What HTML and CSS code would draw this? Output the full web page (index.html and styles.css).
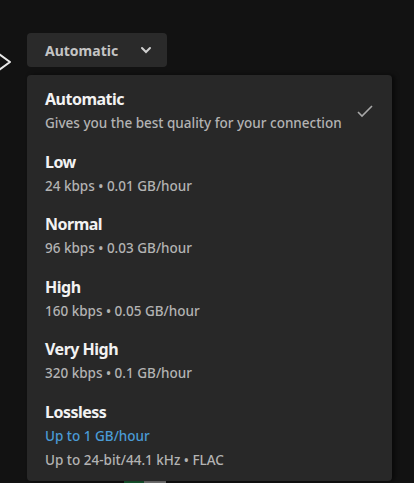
FILE: index.html
```html
<html>
    <head>
        <title>Streaming quality</title>
        <link rel="stylesheet" href="styles.css">
    </head>
    <body>
        <div class="cursor">
            <svg width="14" height="20" viewBox="0 0 14 20"><path d="M1 2 L12 10 L1 18 Z" fill="none" stroke="#e8e8e8" stroke-width="2" stroke-linejoin="round"/></svg>
        </div>
        <div class="stage">
            <button class="picker">
                <span>Automatic</span>
                <svg width="12" height="8" viewBox="0 0 12 8"><path d="M2 2 L6 6 L10 2" fill="none" stroke="#d0d0d0" stroke-width="2" stroke-linecap="round"/></svg>
            </button>
            <div class="menu">
                <div class="item">
                    <div class="text">
                        <div class="title">Automatic</div>
                        <div class="sub">Gives you the best quality for your connection</div>
                    </div>
                    <svg class="check" width="18" height="14" viewBox="0 0 18 14"><path d="M2 8 L6 12 L16 2" fill="none" stroke="#a8a8a8" stroke-width="1.6"/></svg>
                </div>
                <div class="item">
                    <div class="text">
                        <div class="title">Low</div>
                        <div class="sub">24 kbps • 0.01 GB/hour</div>
                    </div>
                </div>
                <div class="item">
                    <div class="text">
                        <div class="title">Normal</div>
                        <div class="sub">96 kbps • 0.03 GB/hour</div>
                    </div>
                </div>
                <div class="item">
                    <div class="text">
                        <div class="title">High</div>
                        <div class="sub">160 kbps • 0.05 GB/hour</div>
                    </div>
                </div>
                <div class="item">
                    <div class="text">
                        <div class="title">Very High</div>
                        <div class="sub">320 kbps • 0.1 GB/hour</div>
                    </div>
                </div>
                <div class="item">
                    <div class="text">
                        <div class="title">Lossless</div>
                        <div class="sub blue">Up to 1 GB/hour</div>
                        <div class="sub">Up to 24-bit/44.1 kHz • FLAC</div>
                    </div>
                </div>
            </div>
            <div class="peek"><span class="g"></span><span class="w"></span></div>
        </div>
    </body>
</html>
```

FILE: styles.css
```css
body{
    margin: 0;
    background-color: #121212;
    font-family: "Noto Sans", sans-serif;
    position: relative;
    height: 483px;
    overflow: hidden;
}
.cursor{
    position: absolute;
    left: -2px;
    top: 52px;
}
.stage{
    padding: 33px 0 0 27px;
    width: 365px;
    position: relative;
}
.picker{
    display: flex;
    align-items: center;
    justify-content: space-between;
    width: 140px;
    height: 34px;
    padding: 0 15px 0 18px;
    border: none;
    border-radius: 4px;
    background-color: #2a2a2a;
    color: #c4c4c4;
    font-family: "Noto Sans", sans-serif;
    font-size: 14px;
    font-weight: 700;
}
.menu{
    margin-top: 8px;
    background-color: #282828;
    border-radius: 4px;
    padding: 12px 0 0 0;
    height: 394px;
    box-shadow: 3px 0 4px rgba(0,0,0,0.5);
    position: relative;
    z-index: 1;
    display: flex;
    flex-direction: column;
    gap: 14.6px;
}
.item{
    display: flex;
    justify-content: space-between;
    align-items: center;
    padding: 0 18px;
}
.title{
    color: #f2f2f2;
    font-size: 16px;
    font-weight: 700;
    line-height: 24px;
    letter-spacing: -0.5px;
}
.sub{
    color: #b3b3b3;
    font-size: 13.5px;
    font-weight: 500;
    line-height: 24px;
}
.sub.blue{
    color: #4a9bd6;
}
.peek{
    position: absolute;
    left: 124px;
    top: 478px;
    display: flex;
}
.peek .g{
    width: 20px;
    height: 6px;
    background-color: #1a5a32;
}
.peek .w{
    width: 22px;
    height: 6px;
    background-color: #7a7a7a;
}
```
